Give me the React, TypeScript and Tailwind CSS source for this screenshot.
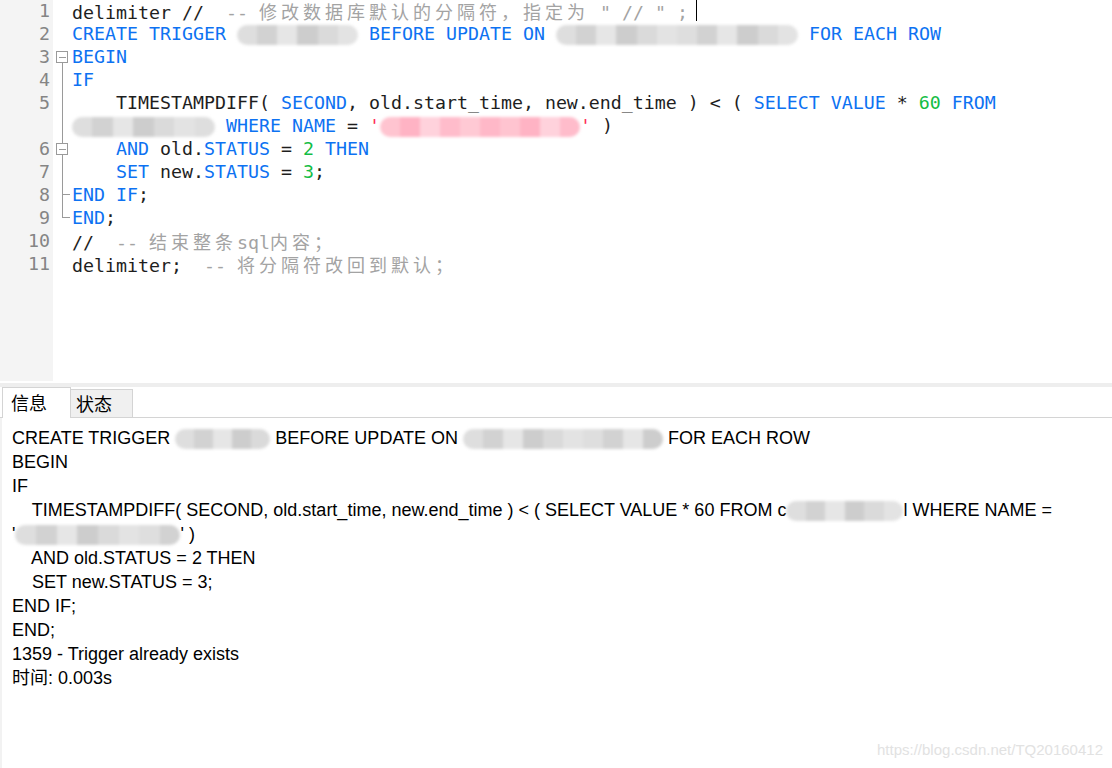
import * as React from "react";

const mono = "font-['DejaVu_Sans_Mono','Liberation_Mono',monospace]";
const cjk = "font-['Noto_Sans_CJK_SC',sans-serif]";
const ui = "font-['Liberation_Sans','Noto_Sans_CJK_SC',sans-serif]";

// keyword / number / comment / string helpers
const K = ({ children }: { children: React.ReactNode }) => <span className="text-[#0d72f2]">{children}</span>;
const G = ({ children }: { children: React.ReactNode }) => <span className="text-[#14bd45]">{children}</span>;
const C = ({ children }: { children: React.ReactNode }) => <span className="text-[#a3a3a3]">{children}</span>;
const Z = ({ children }: { children: React.ReactNode }) => (
  <span className={`${cjk} text-[#a3a3a3] text-[18px] leading-[22px] tracking-[4px]`}>{children}</span>
);
const R = ({ children }: { children: React.ReactNode }) => <span className="text-[#ff2d57]">{children}</span>;

// mosaic blur used where the original was redacted
function Blur({ w, pink = false }: { w: number; pink?: boolean }) {
  const tones = pink
    ? ["#ffc4d0", "#ffb3c4", "#ffd2dc", "#ffbccb", "#ffc9d4", "#ffb8c8"]
    : ["#dedede", "#d2d2d2", "#e6e6e6", "#cdcdcd", "#dadada", "#e3e3e3"];
  const n = Math.max(3, Math.round(w / 20));
  return (
    <span className="inline-block align-middle relative" style={{ width: w, height: 20 }}>
      <span className="absolute inset-0 flex overflow-hidden rounded-full blur-[1.5px]">
        {Array.from({ length: n }).map((_, i) => (
          <span key={i} className="flex-1 h-full" style={{ background: tones[i % tones.length] }} />
        ))}
      </span>
    </span>
  );
}

const rows: { n?: number; content: React.ReactNode }[] = [
  {
    n: 1,
    content: (
      <>
        delimiter //  <C>-- </C>
        <Z>修改数据库默认的分隔符，指定为</Z>
        <C> " // " ;</C>
        <span className="inline-block w-[1px] h-[21px] bg-black align-top ml-[8px]" />
      </>
    ),
  },
  {
    n: 2,
    content: (
      <>
        <K>CREATE TRIGGER</K> <Blur w={121} /> <K>BEFORE UPDATE ON</K> <Blur w={242} /> <K>FOR EACH ROW</K>
      </>
    ),
  },
  { n: 3, content: <K>BEGIN</K> },
  { n: 4, content: <K>IF</K> },
  {
    n: 5,
    content: (
      <>
        {"    TIMESTAMPDIFF( "}
        <K>SECOND</K>, old.start_time, new.end_time ) &lt; ( <K>SELECT VALUE</K> * <G>60</G> <K>FROM</K>
      </>
    ),
  },
  {
    content: (
      <>
        <Blur w={143} /> <K>WHERE NAME</K> = <R>'</R>
        <Blur w={200} pink />
        <R>'</R> )
      </>
    ),
  },
  {
    n: 6,
    content: (
      <>
        {"    "}
        <K>AND</K> old.<K>STATUS</K> = <G>2</G> <K>THEN</K>
      </>
    ),
  },
  {
    n: 7,
    content: (
      <>
        {"    "}
        <K>SET</K> new.<K>STATUS</K> = <G>3</G>;
      </>
    ),
  },
  { n: 8, content: <><K>END IF</K>;</> },
  { n: 9, content: <><K>END</K>;</> },
  {
    n: 10,
    content: (
      <>
        //  <C>-- </C>
        <Z>结束整条</Z>
        <C>sql</C>
        <Z>内容；</Z>
      </>
    ),
  },
  {
    n: 11,
    content: (
      <>
        delimiter;  <C>-- </C>
        <Z>将分隔符改回到默认；</Z>
      </>
    ),
  },
];

export default function App() {
  return (
    <div className="w-[1112px] h-[768px] flex flex-col bg-white overflow-hidden">
      {/* editor */}
      <div className="h-[383px] flex">
        <div className={`${mono} w-[53px] h-[381px] bg-[#f4f4f4] text-[#858585] text-[18.27px] text-right pr-[3px]`}>
          {rows.map((r, i) => (
            <div key={i} className="h-[23px] leading-[22px]">
              {r.n ?? ""}
            </div>
          ))}
        </div>
        <svg width="19" height="383" className="shrink-0">
          <g stroke="#9a9a9a" strokeWidth="1" fill="white" shapeRendering="crispEdges">
            <line x1="9.5" y1="62" x2="9.5" y2="143" />
            <line x1="9.5" y1="154" x2="9.5" y2="217.5" />
            <line x1="9.5" y1="194.5" x2="17" y2="194.5" />
            <line x1="9.5" y1="217.5" x2="17" y2="217.5" />
            <rect x="3.5" y="51.5" width="11" height="11" />
            <line x1="5.5" y1="57.5" x2="13" y2="57.5" />
            <rect x="3.5" y="143.5" width="11" height="11" />
            <line x1="5.5" y1="149.5" x2="13" y2="149.5" />
          </g>
        </svg>
        <div className={`${mono} flex-1 text-[18.27px] text-[#1e1e1e] whitespace-pre`}>
          {rows.map((r, i) => (
            <div key={i} className="h-[23px] leading-[22px]">
              {r.content}
            </div>
          ))}
        </div>
      </div>

      <div className="h-[4px] bg-[#eeeeee]" />

      {/* tabs */}
      <div className={`${cjk} h-[31px] flex items-end text-[18px] text-black`}>
        <div className="w-[2px] h-full border-b border-[#d4d4d4]" />
        <div className="w-[69px] h-[31px] bg-white border border-b-0 border-[#d4d4d4] pl-[8px] leading-[28px]">信息</div>
        <div className="w-[62px] h-[29px] bg-[#f0f0f0] border border-l-0 border-[#d4d4d4] pl-[5px] leading-[26px]">状态</div>
        <div className="flex-1 h-full border-b border-[#d4d4d4]" />
      </div>

      {/* messages */}
      <div className={`${ui} relative flex-1 pt-[8px] pl-[10px] text-[18px] leading-[24px] text-black whitespace-pre border-l-2 border-[#f2f2f2]`}>
        <div>
          CREATE TRIGGER <Blur w={95} /> BEFORE UPDATE ON <Blur w={200} /> FOR EACH ROW
        </div>
        <div>BEGIN</div>
        <div>IF</div>
        <div>
          {"    TIMESTAMPDIFF( SECOND, old.start_time, new.end_time ) < ( SELECT VALUE * 60 FROM c"}
          <Blur w={117} />l WHERE NAME =
        </div>
        <div>
          '<Blur w={165} />' )
        </div>
        <div>{"    AND old.STATUS = 2 THEN"}</div>
        <div>{"    SET new.STATUS = 3;"}</div>
        <div>END IF;</div>
        <div>END;</div>
        <div>1359 - Trigger already exists</div>
        <div>时间: 0.003s</div>
        <div className="absolute right-[9px] bottom-[9px] text-[15px] leading-[18px] text-[#e2e2e2] font-['Liberation_Sans',sans-serif]">
          https://blog.csdn.net/TQ20160412
        </div>
      </div>
    </div>
  );
}
